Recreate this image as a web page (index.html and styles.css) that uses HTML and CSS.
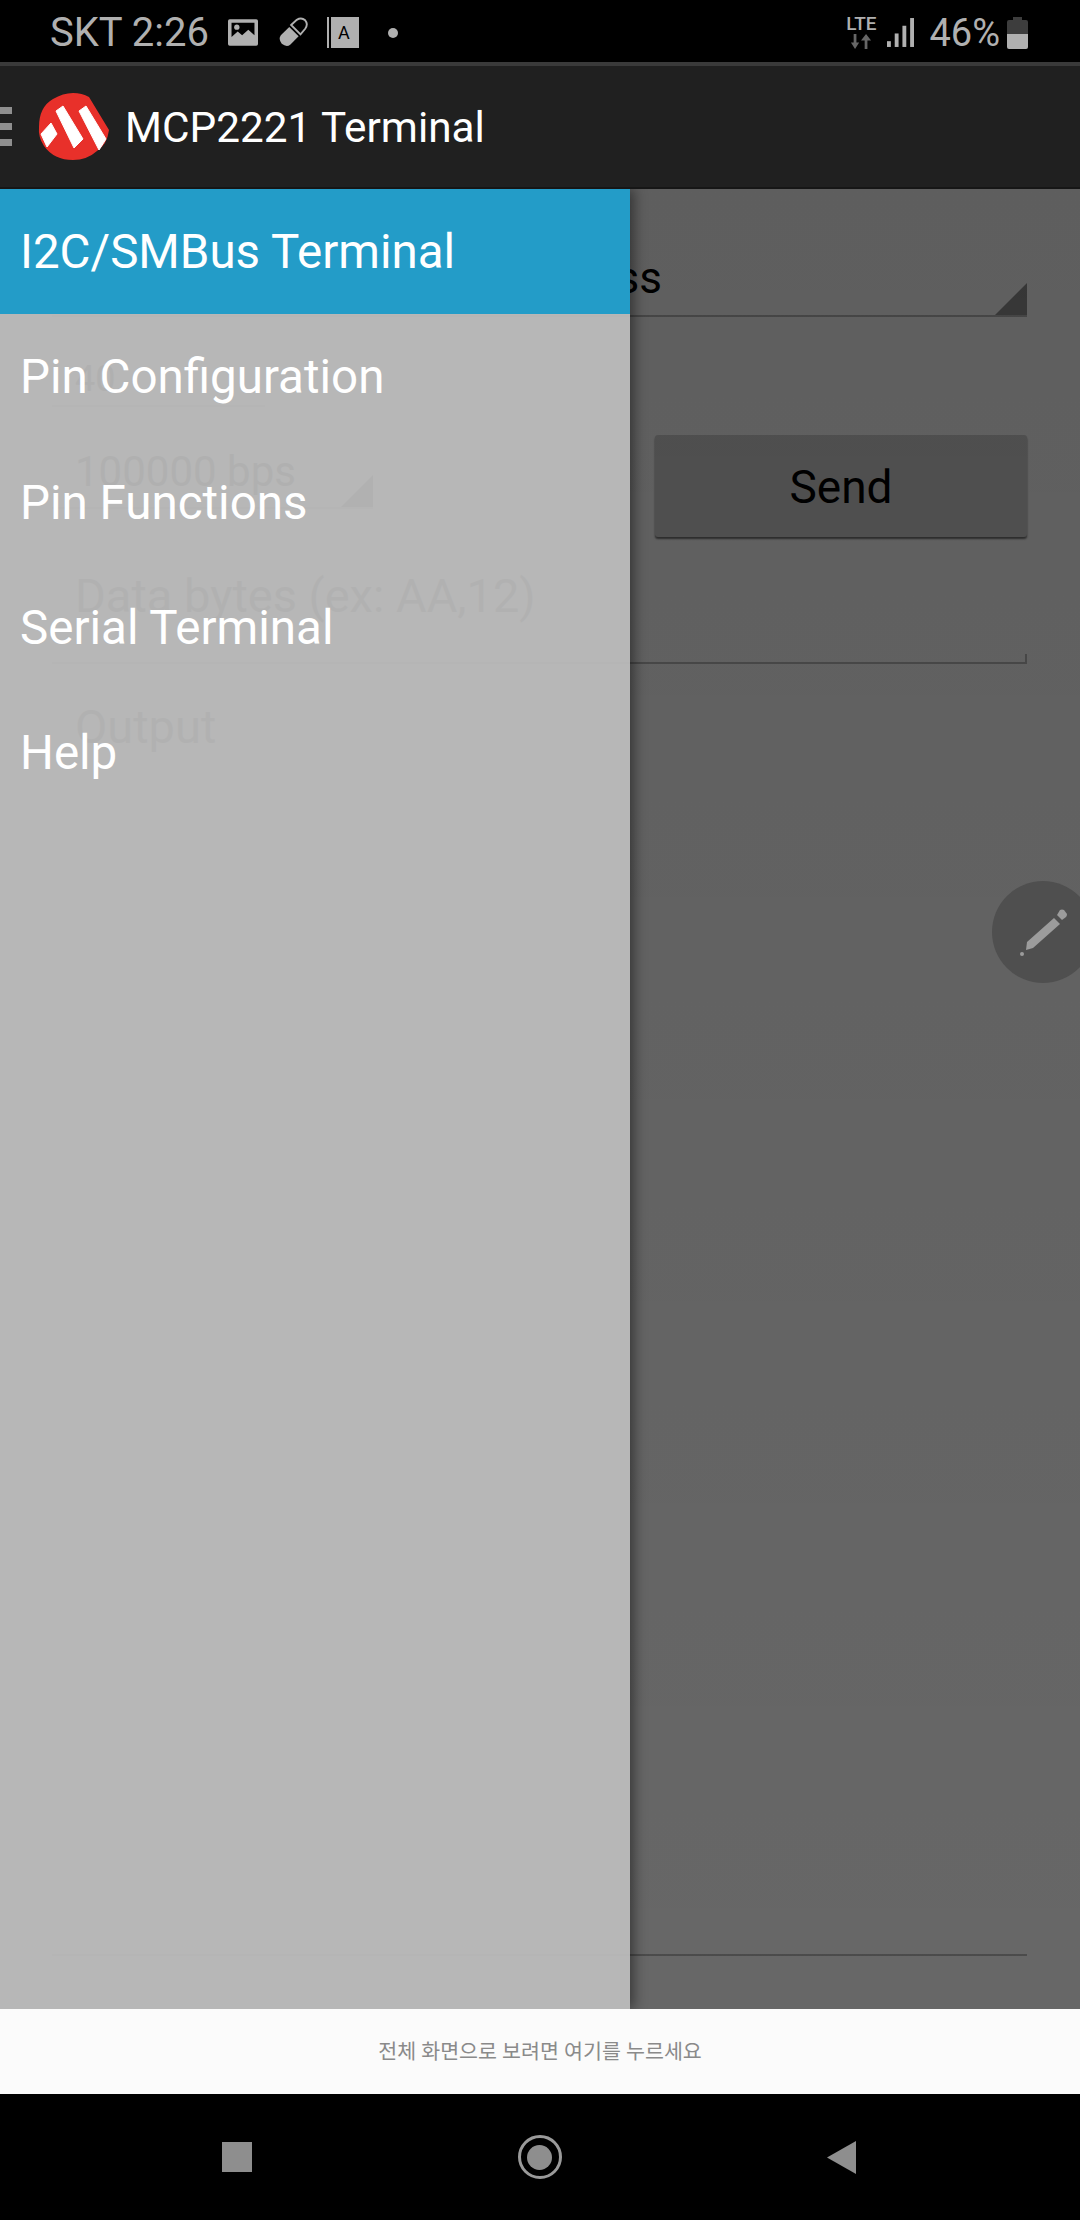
FILE: index.html
```html
<!DOCTYPE html>
<html lang="ko">
<head>
  <meta charset="UTF-8" />
  <title>MCP2221 Terminal</title>
  <link rel="stylesheet" href="styles.css">
</head>
<body>
  <div class="phone">
    <!-- Status bar -->
    <div class="status-bar">
      <div class="status-left">
        <span>SKT 2:26</span>
        <svg class="icon-picture" width="30" height="29" viewBox="0 0 34 30">
          <path fill="#b0b0b0" fill-rule="evenodd" d="M2 0h30a2 2 0 0 1 2 2v26a2 2 0 0 1-2 2H2a2 2 0 0 1-2-2V2a2 2 0 0 1 2-2zM4 4v16l7-6 5 4 7-6 7 6V4z"/>
          <circle cx="10" cy="9" r="3" fill="#b0b0b0"/>
        </svg>
        <svg class="icon-pill" width="30" height="31" viewBox="0 0 32 32">
          <path fill="#b0b0b0" d="M3 19 L12 10 L22 20 L13 29 Q9 32 4 28 Q0 23 3 19z"/>
          <path fill="none" stroke="#b0b0b0" stroke-width="2" d="M14 8 L20 2.500 Q25 -0.500 29 3 Q32.500 7 29 12 L24 18z"/>
        </svg>
        <span class="a-icon">A</span>
        <span class="dot"></span>
      </div>
      <div class="status-right">
        <div class="lte">
          <span>LTE</span>
          <svg width="22" height="15" viewBox="0 0 24 14" preserveAspectRatio="none">
            <path fill="#666" d="M4 0h3v8h3l-4.500 6L1 8h3z"/>
            <path fill="#666" d="M16 14h3V6h4l-5.500-6L12 6h4z"/>
          </svg>
        </div>
        <svg class="signal" width="27" height="29" viewBox="0 0 28 30">
          <rect x="0" y="24" width="4" height="6" fill="#b0b0b0"/>
          <rect x="8" y="16" width="4" height="14" fill="#b0b0b0"/>
          <rect x="16" y="8" width="4" height="22" fill="#b0b0b0"/>
          <rect x="24" y="0" width="4" height="30" fill="#b0b0b0"/>
        </svg>
        <span class="battery-text">46%</span>
        <svg width="21" height="32" viewBox="0 0 21 32">
          <path fill="#3d3d3d" d="M6 0h9v3h4a2 2 0 0 1 2 2v12H0V5a2 2 0 0 1 2-2h4z"/>
          <path fill="#b0b0b0" d="M0 17h21v13a2 2 0 0 1-2 2H2a2 2 0 0 1-2-2z"/>
        </svg>
      </div>
    </div>

    <!-- App bar -->
    <div class="app-bar">
      <div class="hamburger"><i></i><i></i><i></i></div>
      <svg class="logo" width="72" height="67" viewBox="0 0 72 67">
        <path fill="#e8302a" d="M35 0 Q44 0 51 4 L71 37 Q69 52 59 58 Q49 67 35 67 Q16 67 6 53 Q0 44 1 34 Q1 14 15 6 Q25 0 35 0z"/>
        <g fill="#fff" stroke="#fff" stroke-width="1" stroke-linejoin="round">
          <path d="M18 18 L25 13 L45 46 L36 55z"/>
          <path d="M41 18 L48 13 L68 46 L61 57z"/>
          <path d="M3 41 L13 30 L19 41 L9 54z"/>
        </g>
      </svg>
      <span class="app-title">MCP2221 Terminal</span>
    </div>

    <!-- Screen content, dimmed by the scrim with the drawer on top -->
    <div class="screen">
      <form class="terminal">
        <div class="spinner wide">
          <span class="mode">I2C Write</span><span>8 bit Address</span>
          <svg class="arrow dark" viewBox="0 0 32 32"><path d="M32 0v32H0z"/></svg>
        </div>

        <div class="middle-row">
          <div class="left-col">
            <div class="field short"><span>40</span></div>
            <div class="spinner short">
              <span>100000 bps</span>
              <svg class="arrow" viewBox="0 0 32 32"><path d="M32 0v32H0z"/></svg>
            </div>
          </div>
          <button type="button" class="send">Send</button>
        </div>

        <div class="field data"><span class="hint">Data bytes (ex: AA,12)</span></div>
        <div class="output"><span class="hint">Output</span></div>
      </form>

      <div class="scrim"></div>

      <div class="fab">
        <svg width="56" height="56" viewBox="0 0 56 56">
          <path fill="#9c9c9c" d="M13 36 L40 12 L46 18 L19 42 L12 44z"/>
          <path fill="#9c9c9c" d="M43 9 L46 4 Q48 3 50 4 L53 8 Q53 10 52 11 L48 14z"/>
          <circle cx="8" cy="48" r="2" fill="#9c9c9c"/>
        </svg>
      </div>

      <nav class="drawer">
        <a class="selected">I2C/SMBus Terminal</a>
        <a>Pin Configuration</a>
        <a>Pin Functions</a>
        <a>Serial Terminal</a>
        <a>Help</a>
      </nav>
    </div>

    <!-- Full screen hint -->
    <div class="hint-bar">전체 화면으로 보려면 여기를 누르세요</div>

    <!-- Navigation bar -->
    <div class="nav-bar">
      <span class="nav-square"></span>
      <span class="nav-home"><i></i></span>
      <svg width="29" height="33" viewBox="0 0 29 33"><path fill="#8e8e8e" d="M29 0v33L0 16.500z"/></svg>
    </div>
  </div>
</body>
</html>
```

FILE: styles.css
```css
/* Basic Reset & Body */
* {
  margin: 0;
  padding: 0;
  box-sizing: border-box;
}
body {
  font-family: 'Roboto', 'Noto Sans CJK KR', sans-serif;
  background: #000;
}
.phone {
  width: 1080px;
  height: 2220px;
  display: flex;
  flex-direction: column;
  overflow: hidden;
}

/* Status Bar */
.status-bar {
  height: 62px;
  background: #000;
  color: #b0b0b0;
  display: flex;
  align-items: center;
  justify-content: space-between;
  padding: 3px 52px 0 50px;
  flex-shrink: 0;
}
.status-left {
  display: flex;
  align-items: center;
  font-size: 40px;
}
.icon-picture {
  margin-left: 19px;
}
.icon-pill {
  margin-left: 20px;
}
.a-icon {
  width: 32px;
  height: 31px;
  margin-left: 19px;
  background: #b0b0b0;
  border-left: 2px solid #b0b0b0;
  box-shadow: inset 2px 0 0 #000;
  color: #000;
  font-size: 18px;
  text-align: center;
  line-height: 31px;
}
.dot {
  width: 10px;
  height: 10px;
  margin-left: 29px;
  border-radius: 50%;
  background: #b0b0b0;
}
.status-right {
  display: flex;
  align-items: center;
}
.lte {
  display: flex;
  flex-direction: column;
  align-items: center;
  gap: 2px;
  font-size: 19px;
  line-height: 16px;
  font-weight: 500;
}
.signal {
  margin-left: 11px;
}
.battery-text {
  font-size: 38px;
  margin: 0 7px 0 15px;
}

/* App Bar */
.app-bar {
  height: 127px;
  background: #202020;
  border-top: 4px solid #3a3a3a;
  border-bottom: 2px solid #161616;
  display: flex;
  align-items: center;
  flex-shrink: 0;
}
.hamburger {
  width: 12px;
  margin-right: 26px;
  display: flex;
  flex-direction: column;
  gap: 9px;
}
.hamburger i {
  height: 7px;
  background: #8f8f8f;
}
.logo {
  margin-right: 15px;
}
.app-title {
  color: #fff;
  font-size: 42.300px;
  padding-top: 2px;
}

/* Screen */
.screen {
  position: relative;
  flex: 1;
  background: #fff;
  color: #000;
  overflow: hidden;
}
.terminal {
  height: 100%;
  padding: 0 53px 53px 52px;
  display: flex;
  flex-direction: column;
  font-size: 42px;
}
.scrim {
  position: absolute;
  inset: 0;
  background: linear-gradient(180deg, rgba(0,0,0,0.63), rgba(0,0,0,0.595));
}

/* Form */
.spinner {
  position: relative;
  border-bottom: 2px solid #bbb;
}
.spinner span,
.field span {
  display: block;
  padding-left: 23px;
}
.spinner.wide {
  margin-top: 60px;
  height: 68px;
  display: flex;
  font-size: 44px;
  line-height: 58px;
}
.spinner.wide span {
  padding-left: 0;
}
.spinner.wide .mode {
  width: 329px;
  margin-left: 23px;
}
.arrow {
  position: absolute;
  right: 0;
  bottom: 0;
  width: 32px;
  height: 32px;
  fill: #333;
}
.arrow.dark {
  fill: #939393;
}
.middle-row {
  display: flex;
  justify-content: space-between;
  margin-top: 30px;
}
.left-col {
  width: 321px;
}
.field {
  position: relative;
  border-bottom: 2px solid #bbb;
}
.field.short {
  width: 213px;
  height: 60px;
  font-size: 36px;
  line-height: 64px;
}
.spinner.short {
  margin-top: 36px;
  height: 66px;
  line-height: 58px;
}
.send {
  width: 372px;
  height: 102px;
  margin-top: 88px;
  padding-top: 2px;
  border: none;
  border-radius: 3px;
  background: #d2d2d2;
  box-shadow: 0 2px 2px rgba(0,0,0,0.55);
  font-family: inherit;
  font-size: 46px;
  color: #000;
}
.field.data {
  margin-top: 28px;
  height: 99px;
  line-height: 62px;
  font-size: 47px;
}
.field.data::after {
  content: "";
  position: absolute;
  right: 0;
  bottom: 0;
  width: 2px;
  height: 8px;
  background: #bbb;
}
.output {
  flex: 1;
  margin-top: 32px;
  border-bottom: 2px solid #bbb;
  padding-left: 23px;
  font-size: 47px;
  line-height: 62px;
}
.hint {
  color: #333;
}

/* Floating Button */
.fab {
  position: absolute;
  top: 692px;
  left: 992px;
  width: 102px;
  height: 102px;
  border-radius: 50%;
  background: #4f4f4f;
  padding: 25px 0 0 22px;
}

/* Drawer */
.drawer {
  position: absolute;
  top: 0;
  bottom: 0;
  left: 0;
  width: 630px;
  background: rgba(189,189,189,0.93);
  box-shadow: 4px 0 12px rgba(0,0,0,0.45);
  display: flex;
  flex-direction: column;
}
.drawer a {
  height: 125.300px;
  padding: 1px 0 0 20px;
  color: #fff;
  font-size: 47.500px;
  line-height: 125px;
}
.drawer a.selected {
  background: rgba(30,155,200,0.97);
}

/* Hint Bar */
.hint-bar {
  height: 85px;
  background: #fbfbfb;
  color: #8a8a8a;
  font-size: 20.600px;
  line-height: 86px;
  text-align: center;
  flex-shrink: 0;
}

/* Navigation Bar */
.nav-bar {
  height: 126px;
  background: #000;
  padding: 0 224px 0 222px;
  display: flex;
  align-items: center;
  justify-content: space-between;
  flex-shrink: 0;
}
.nav-square {
  width: 30px;
  height: 30px;
  background: #8e8e8e;
}
.nav-home {
  width: 44px;
  height: 44px;
  border: 3px solid #9a9a9a;
  border-radius: 50%;
  display: flex;
  align-items: center;
  justify-content: center;
}
.nav-home i {
  width: 25px;
  height: 25px;
  border-radius: 50%;
  background: #8e8e8e;
}
```
